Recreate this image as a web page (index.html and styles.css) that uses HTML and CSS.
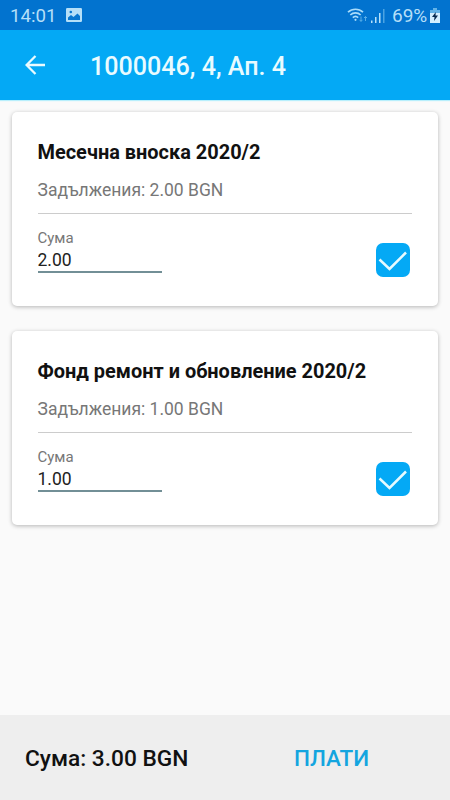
FILE: index.html
```
<!DOCTYPE html>
<html lang="bg">
<head>
  <meta charset="UTF-8">
  <meta name="viewport" content="width=device-width, initial-scale=1">
  <title>1000046, 4, Ап. 4</title>
  <link rel="stylesheet" href="styles.css">
</head>
<body>
  <div class="status-bar">
    <span class="time">14:01</span>
    <svg class="picture" viewBox="0 0 16 14" width="16" height="14">
      <rect width="16" height="14" rx="1.200" fill="#b5dff8"/>
      <path d="M2 12V9.500l3-2.500 2.500 2 4-3.500L14 8v4z" fill="#0877d0"/>
      <circle cx="4.800" cy="4" r="1.300" fill="#0877d0"/>
    </svg>
    <div class="status-right">
      <svg viewBox="0 0 22 16" width="22" height="16" fill="none" stroke="#a9dcfa">
        <path d="M1 5.200a11 11 0 0 1 15 0M3.300 8a7.500 7.500 0 0 1 10.400 0M5.800 10.600a4 4 0 0 1 5.400 0" stroke-width="1.700"/>
        <circle cx="8.500" cy="12.800" r="1.100" fill="#a9dcfa" stroke="none"/>
        <path d="M14 9.500v5M12.500 12.800l1.500 1.500 1.500-1.500M18.500 14V9.500M17 11l1.500-1.500 1.500 1.500" stroke="#58aee8" stroke-width="1"/>
      </svg>
      <svg class="signal" viewBox="0 0 14 15" width="14" height="15">
        <path d="M0 12.500h1.500V15H0zM4 9h1.500v6H4zM8 5h1.500v10H8z" fill="#b5e0fa"/>
        <path d="M12 1h1.500v14H12z" fill="#4ba3e2"/>
      </svg>
      <span class="percent">69%</span>
      <svg class="battery" viewBox="0 0 10 15" width="10" height="15">
        <path d="M3 0h4v2H3z" fill="#62b3e8"/>
        <path d="M0 2h10v4H0z" fill="#62b3e8"/>
        <path d="M0 5h10v10H0z" fill="#d5efff"/>
        <path d="M5.800 4L2 9h2.500L4 13l4-5.500H5.500z" fill="#082b50"/>
      </svg>
    </div>
  </div>

  <header class="app-bar">
    <svg class="back" viewBox="0 0 20 20" width="20" height="20" fill="none" stroke="#e9fbff" stroke-width="2.300">
      <path d="M20 10H2M10.500 1L1.600 10l8.900 9"/>
    </svg>
    <h1>1000046, 4, Ап. 4</h1>
  </header>

  <main class="bills">
    <section class="card">
      <h2>Месечна вноска 2020/2</h2>
      <p class="due">Задължения: 2.00 BGN</p>
      <div class="payment">
        <div class="field">
          <label for="sum1">Сума</label>
          <input type="text" id="sum1" value="2.00">
        </div>
        <svg class="check" viewBox="0 0 34 34" width="34" height="34">
          <rect width="34" height="34" rx="7" fill="#04a9f5"/>
          <path d="M3.500 16.500l10 9.500L30 9.500" fill="none" stroke="#e6faff" stroke-width="2.500"/>
        </svg>
      </div>
    </section>

    <section class="card">
      <h2>Фонд ремонт и обновление 2020/2</h2>
      <p class="due">Задължения: 1.00 BGN</p>
      <div class="payment">
        <div class="field">
          <label for="sum2">Сума</label>
          <input type="text" id="sum2" value="1.00">
        </div>
        <svg class="check" viewBox="0 0 34 34" width="34" height="34">
          <rect width="34" height="34" rx="7" fill="#04a9f5"/>
          <path d="M3.500 16.500l10 9.500L30 9.500" fill="none" stroke="#e6faff" stroke-width="2.500"/>
        </svg>
      </div>
    </section>
  </main>

  <footer class="total-bar">
    <span class="total">Сума: 3.00 BGN</span>
    <button type="button" class="pay">ПЛАТИ</button>
  </footer>
</body>
</html>
```
FILE: styles.css
```
* {
  box-sizing: border-box;
}

body {
  margin: 0;
  height: 100vh;
  display: flex;
  flex-direction: column;
  font-family: Roboto, sans-serif;
  background: #fafafa;
  color: #111;
}

h1, h2, p {
  margin: 0;
}

svg {
  display: block;
  flex: none;
}

.status-bar {
  display: flex;
  align-items: center;
  height: 30px;
  padding: 0 10px;
  background: #0273cf;
  color: #b5dff8;
}

.time {
  width: 56px;
  padding-top: 1px;
  font-size: 18.7px;
  line-height: 30px;
}

.status-right {
  display: flex;
  align-items: center;
  margin-left: auto;
}

.signal {
  margin-left: 2px;
}

.percent {
  width: 38px;
  margin-left: 7px;
  padding-top: 1px;
  font-size: 19px;
  line-height: 30px;
}

.app-bar {
  display: flex;
  align-items: center;
  height: 70px;
  padding: 0 25px;
  background: #04a9f5;
  box-shadow: 0 1px 1px #b8effc;
}

.app-bar h1 {
  margin-left: 45px;
  padding-top: 4px;
  font-size: 25.1px;
  font-weight: 500;
  line-height: 34px;
  color: #e9fbff;
}

.bills {
  flex: 1;
  display: flex;
  flex-direction: column;
  gap: 25px;
  padding: 12px;
}

.card {
  height: 194px;
  padding: 26px 26px 0 25.5px;
  background: #fff;
  border-radius: 5px;
  box-shadow: 0 1px 4px rgba(0, 0, 0, 0.28);
}

.card h2 {
  font-size: 19.95px;
  font-weight: 700;
  line-height: 28px;
}

.due {
  padding: 12px 0 11px;
  font-size: 17.5px;
  line-height: 24px;
  color: #777;
  border-bottom: 1px solid #ccc;
}

.payment {
  display: flex;
  justify-content: space-between;
  padding: 14px 2.5px 0 0;
}

.field {
  width: 124.5px;
}

.field label {
  display: block;
  font-size: 15px;
  line-height: 20px;
  color: #777;
}

.field input {
  display: block;
  width: 100%;
  height: 25px;
  padding: 0;
  border: none;
  border-bottom: 2px solid #728f96;
  outline: none;
  background: none;
  font-family: inherit;
  font-size: 17.5px;
  color: #222;
}

.check {
  margin-top: 15px;
}

.total-bar {
  display: flex;
  align-items: center;
  height: 85px;
  padding: 0 25px;
  background: #eee;
}

.total {
  width: 269px;
  padding-top: 2px;
  font-size: 22.7px;
  font-weight: 500;
}

.pay {
  padding: 0;
  border: none;
  background: none;
  font-family: inherit;
  font-size: 22.5px;
  font-weight: 500;
  color: #14a5df;
}
```
